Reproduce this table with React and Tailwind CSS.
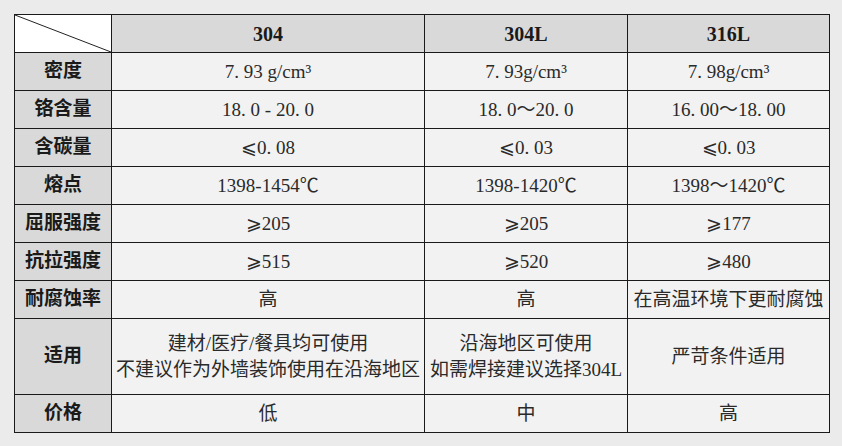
import React from 'react';

const serif = { fontFamily: '"Liberation Serif", "Noto Sans CJK SC", serif' };

const rows = [
  { label: '密度', values: ['7. 93 g/cm³', '7. 93g/cm³', '7. 98g/cm³'] },
  { label: '铬含量', values: ['18. 0 - 20. 0', '18. 0～20. 0', '16. 00～18. 00'] },
  { label: '含碳量', values: ['⩽0. 08', '⩽0. 03', '⩽0. 03'] },
  { label: '熔点', values: ['1398-1454℃', '1398-1420℃', '1398～1420℃'] },
  { label: '屈服强度', values: ['⩾205', '⩾205', '⩾177'] },
  { label: '抗拉强度', values: ['⩾515', '⩾520', '⩾480'] },
  { label: '耐腐蚀率', values: ['高', '高', '在高温环境下更耐腐蚀'] },
  {
    label: '适用',
    tall: true,
    values: [
      ['建材/医疗/餐具均可使用', '不建议作为外墙装饰使用在沿海地区'],
      ['沿海地区可使用', '如需焊接建议选择304L'],
      ['严苛条件适用'],
    ],
  },
  { label: '价格', values: ['低', '中', '高'] },
];

export default function App() {
  return (
    <div className="min-h-screen w-full bg-[#ebebeb] pt-[14px] pl-[14px]" style={serif}>
      <table className="border-collapse table-fixed w-[815px] text-[19px]">
        <colgroup>
          <col className="w-[97px]" />
          <col className="w-[313px]" />
          <col className="w-[203px]" />
          <col className="w-[202px]" />
        </colgroup>
        <thead>
          <tr className="h-[38px]">
            <th className="relative border border-[#1a1a1a] bg-white p-0">
              <svg className="absolute inset-0 h-full w-full" viewBox="0 0 100 100" preserveAspectRatio="none">
                <line x1="0" y1="0" x2="100" y2="100" stroke="#222" strokeWidth="1" vectorEffect="non-scaling-stroke" />
              </svg>
            </th>
            {['304', '304L', '316L'].map((h) => (
              <th key={h} className="border border-[#1a1a1a] bg-[#d9d9d9] text-center font-bold text-[20px] text-[#1a1a1a] p-0">
                {h}
              </th>
            ))}
          </tr>
        </thead>
        <tbody>
          {rows.map((r) => (
            <tr key={r.label} className={r.tall ? 'h-[76px]' : 'h-[38px]'}>
              <td className="border border-[#1a1a1a] bg-[#d9d9d9] text-center font-bold text-[#1a1a1a] p-0 whitespace-nowrap">
                {r.label}
              </td>
              {r.values.map((v, i) => (
                <td
                  key={i}
                  className="border border-[#1a1a1a] bg-[#f2f2f2] text-center text-[#2a2a2a] p-0 whitespace-nowrap leading-[26px]"
                >
                  {Array.isArray(v) ? v.map((line) => <div key={line}>{line}</div>) : v}
                </td>
              ))}
            </tr>
          ))}
        </tbody>
      </table>
    </div>
  );
}
